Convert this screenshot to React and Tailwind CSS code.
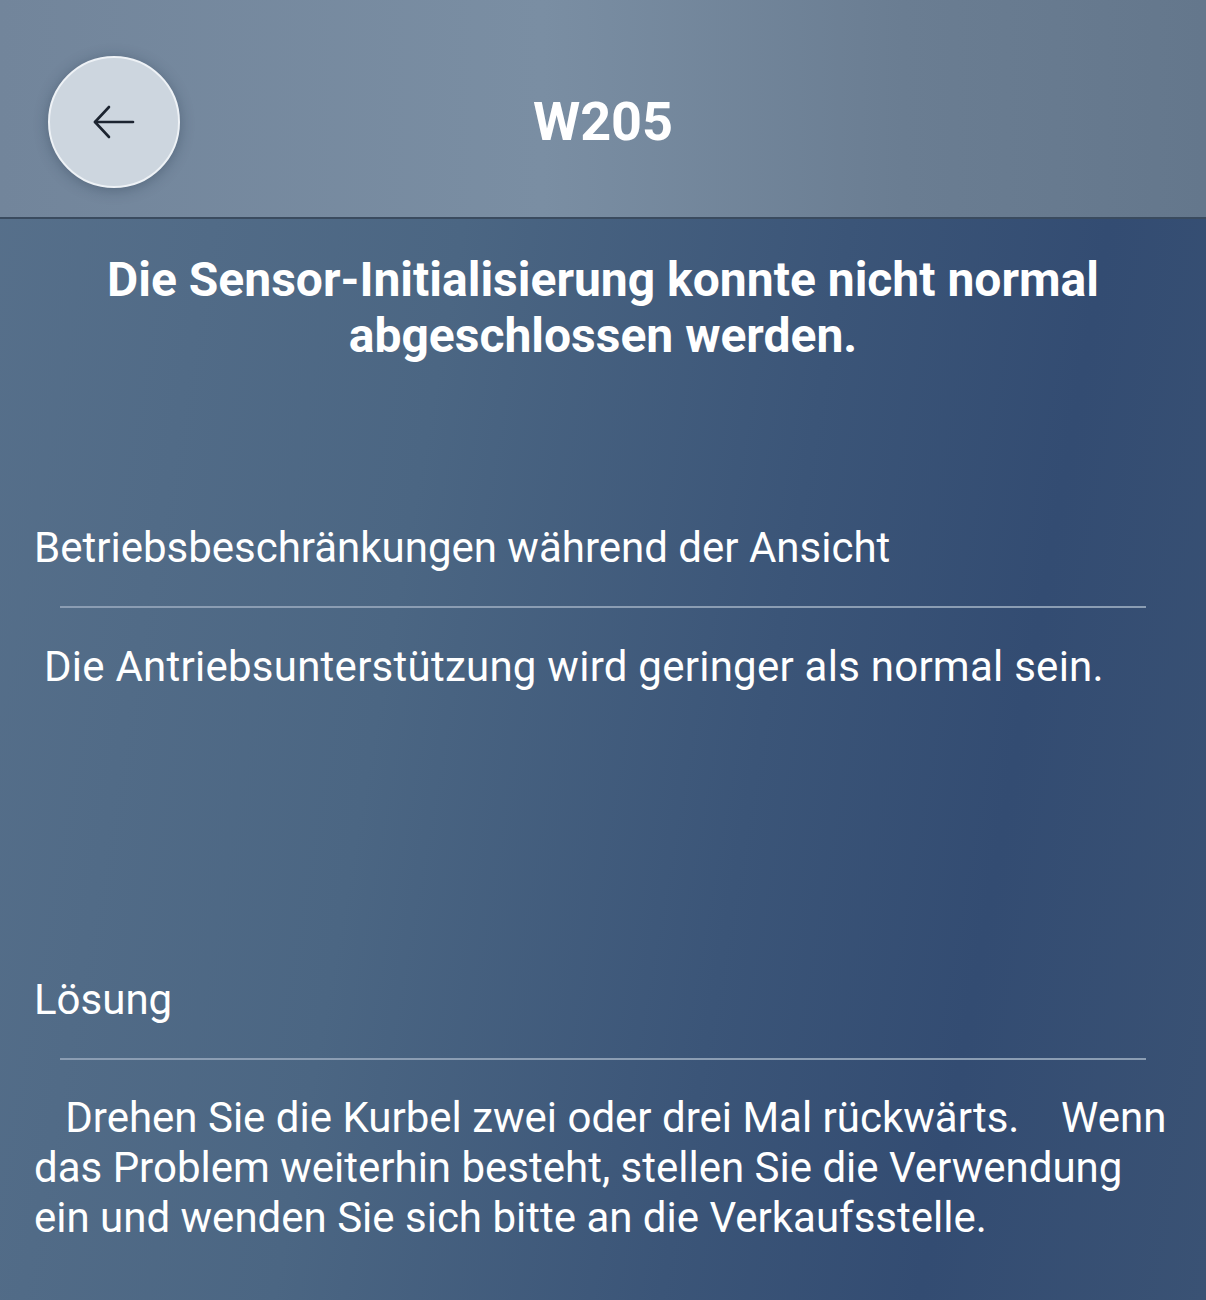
import React from "react";

const font = { fontFamily: "Roboto, 'Noto Sans', sans-serif" };

const BackButton = () => (
    <button className="w-[132px] h-[132px] rounded-full bg-[#cdd6df] border-2 border-[#eef2f6] shadow-[0_2px_14px_rgba(30,45,65,0.35)] flex items-center justify-center">
        <svg width="44" height="36" viewBox="0 0 44 36" fill="none" stroke="#1c2430" strokeWidth="2.6" strokeLinecap="round" strokeLinejoin="round">
            <path d="M3 18 H41" />
            <path d="M17 3 L3 18 L17 33" />
        </svg>
    </button>
);

const Divider = () => <div className="mx-[26px] h-[2px] bg-[#8b9db3]" />;

export default function App() {
    return (
        <div className="w-[1206px] h-[1300px] text-white overflow-hidden bg-[linear-gradient(100deg,#57708b_0%,#4b6683_35%,#3b5578_62%,#334c72_80%,#3a5274_100%)]" style={font}>
            {/* header */}
            <div className="h-[219px] border-b-2 border-[#3a4b5f] bg-[linear-gradient(90deg,#72859b_0%,#7a8ea3_45%,#6a7d92_75%,#64778c_100%)] grid grid-cols-[1fr_auto_1fr] items-start pt-[56px]">
                <div className="pl-[48px]">
                    <BackButton />
                </div>
                <h1 className="text-[54px] leading-[132px] font-bold">W205</h1>
                <div />
            </div>

            <div className="px-[34px]">
                <h2 className="mt-[33px] text-center text-[48px] leading-[56px] font-bold">
                    Die Sensor-Initialisierung konnte nicht normal<br />abgeschlossen werden.
                </h2>

                <p className="mt-[156px] text-[42px] leading-[56px]">Betriebsbeschränkungen während der Ansicht</p>
                <div className="mt-[30px]"><Divider /></div>
                <p className="mt-[31px] pl-[10px] text-[42px] leading-[56px] tracking-[0.25px]">Die Antriebsunterstützung wird geringer als normal sein.</p>

                <p className="mt-[277px] text-[42px] leading-[56px]">Lösung</p>
                <div className="mt-[30px]"><Divider /></div>
                <p className="mt-[33px] text-[42px] leading-[50px] whitespace-pre-wrap">
                    {"   Drehen Sie die Kurbel zwei oder drei Mal rückwärts.    Wenn"}<br />
                    das Problem weiterhin besteht, stellen Sie die Verwendung<br />
                    ein und wenden Sie sich bitte an die Verkaufsstelle.
                </p>
            </div>
        </div>
    );
}
